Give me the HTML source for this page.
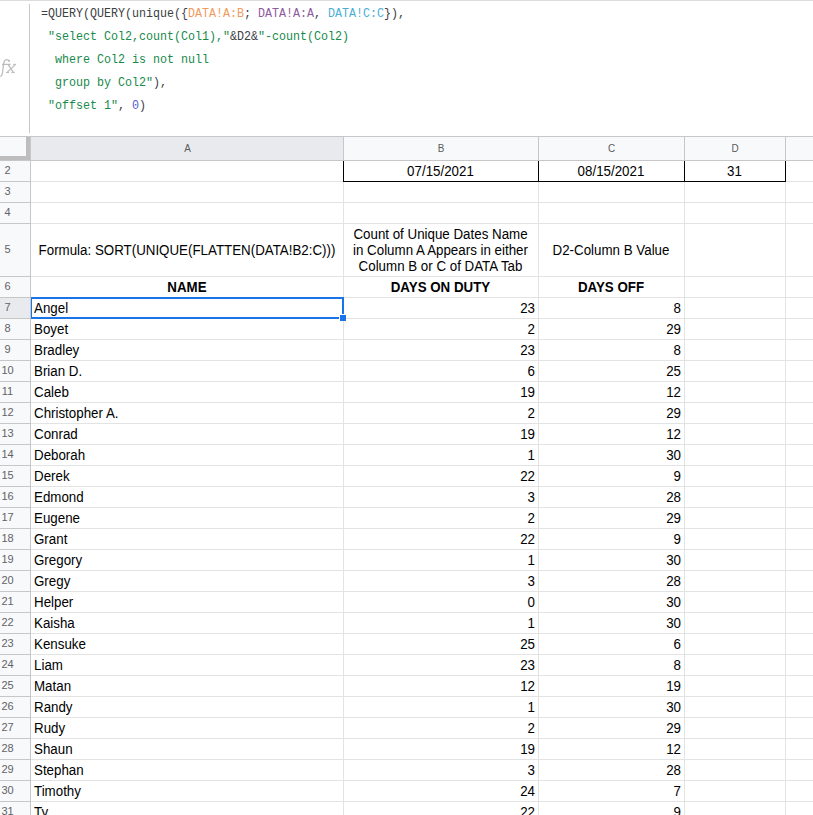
<!DOCTYPE html>
<html><head><meta charset="utf-8">
<style>
html,body{margin:0;padding:0;}
body{width:813px;height:815px;overflow:hidden;position:relative;background:#fff;font-family:"Liberation Sans",sans-serif;}
.a{position:absolute;}
.fl{position:absolute;left:41px;font-family:"Liberation Mono",monospace;font-size:13px;white-space:pre;color:#3c4043;line-height:23px;height:23px;transform-origin:0 0;transform:scaleX(0.8974);}
.s{color:#178a4c}
.r1{color:#f29a5c}
.r2{color:#8d5a9e}
.r3{color:#4aaed4}
.n{color:#5560d0}
.ch{position:absolute;top:137px;height:23px;line-height:23px;text-align:center;font-size:11px;color:#575b60;transform:scaleX(0.9);transform-origin:50% 0;}
.rh{position:absolute;left:-16px;width:47px;text-align:center;font-size:11px;color:#5f6368;}
.t{position:absolute;font-size:14px;color:#000;white-space:nowrap;line-height:16px;transform:scaleX(0.95238);transform-origin:0 0;}
</style></head><body>

<div class="a" style="left:0;top:0;width:813px;height:1px;background:#dadce0"></div>
<div class="a" style="left:29px;top:4px;width:1px;height:129px;background:#c7c7c7"></div>
<svg class="a" style="left:0;top:55px" width="20" height="25" viewBox="0 0 20 25"><g fill="none" stroke="#bdbdbd" stroke-width="1.3"><path d="M0.2,21.3 C1.8,21.2 2.4,19.5 2.7,16.5 L3.6,9 C4.1,5.6 5.2,4.6 7,4.6 C8.3,4.6 9,5.1 9.2,6"/><path d="M2,9.4 H10.5"/><path d="M8.2,9.6 L13.4,17.4"/><path d="M15.2,9.6 L7.2,17.4"/><path d="M6,17.5 H9" stroke-width="1.1"/><path d="M11.4,17.5 H14.8" stroke-width="1.1"/><path d="M13.2,9.4 H16" stroke-width="1.1"/></g><circle cx="9.1" cy="6.1" r="1" fill="#bdbdbd"/></svg>
<div class="fl" style="top:1.5px">=QUERY(QUERY(unique({<span class="r1">DATA!A:B</span>; <span class="r2">DATA!A:A</span>, <span class="r3">DATA!C:C</span>}),</div>
<div class="fl" style="top:24.5px"> <span class="s">"select Col2,count(Col1),"</span>&amp;D2&amp;<span class="s">"-count(Col2)</span></div>
<div class="fl" style="top:47.5px"><span class="s">  where Col2 is not null</span></div>
<div class="fl" style="top:70.5px"><span class="s">  group by Col2"</span>),</div>
<div class="fl" style="top:93.5px"> <span class="s">"offset 1"</span>, <span class="n">0</span>)</div>
<div class="a" style="left:0;top:136px;width:813px;height:1px;background:#c7c7c7"></div>
<div class="a" style="left:0;top:137px;width:813px;height:23px;background:#f8f9fa"></div>
<div class="a" style="left:31px;top:137px;width:312px;height:23px;background:#e8eaed"></div>
<div class="a" style="left:0;top:160px;width:813px;height:1px;background:#c7c7c7"></div>
<div class="a" style="left:0;top:161px;width:30px;height:654px;background:#f8f9fa"></div>
<div class="a" style="left:0;top:298px;width:30px;height:20px;background:#e8eaed"></div>
<div class="a" style="left:30px;top:137px;width:1px;height:678px;background:#c7c7c7"></div>
<div class="a" style="left:26px;top:137px;width:4px;height:23px;background:#bdbdbd"></div>
<div class="a" style="left:0;top:156px;width:30px;height:4px;background:#bdbdbd"></div>
<div class="a" style="left:343px;top:137px;width:1px;height:23px;background:#c7c7c7"></div>
<div class="a" style="left:538px;top:137px;width:1px;height:23px;background:#c7c7c7"></div>
<div class="a" style="left:684px;top:137px;width:1px;height:23px;background:#c7c7c7"></div>
<div class="a" style="left:785px;top:137px;width:1px;height:23px;background:#c7c7c7"></div>
<div class="a" style="left:343px;top:161px;width:1px;height:654px;background:#e2e3e3"></div>
<div class="a" style="left:538px;top:161px;width:1px;height:654px;background:#e2e3e3"></div>
<div class="a" style="left:684px;top:161px;width:1px;height:654px;background:#e2e3e3"></div>
<div class="a" style="left:785px;top:161px;width:1px;height:654px;background:#e2e3e3"></div>
<div class="a" style="left:31px;top:181px;width:782px;height:1px;background:#e2e3e3"></div>
<div class="a" style="left:0;top:181px;width:30px;height:1px;background:#c7c7c7"></div>
<div class="a" style="left:31px;top:202px;width:782px;height:1px;background:#e2e3e3"></div>
<div class="a" style="left:0;top:202px;width:30px;height:1px;background:#c7c7c7"></div>
<div class="a" style="left:31px;top:223px;width:782px;height:1px;background:#e2e3e3"></div>
<div class="a" style="left:0;top:223px;width:30px;height:1px;background:#c7c7c7"></div>
<div class="a" style="left:31px;top:276px;width:782px;height:1px;background:#e2e3e3"></div>
<div class="a" style="left:0;top:276px;width:30px;height:1px;background:#c7c7c7"></div>
<div class="a" style="left:31px;top:297px;width:782px;height:1px;background:#e2e3e3"></div>
<div class="a" style="left:0;top:297px;width:30px;height:1px;background:#c7c7c7"></div>
<div class="a" style="left:31px;top:318px;width:782px;height:1px;background:#e2e3e3"></div>
<div class="a" style="left:0;top:318px;width:30px;height:1px;background:#c7c7c7"></div>
<div class="a" style="left:31px;top:339px;width:782px;height:1px;background:#e2e3e3"></div>
<div class="a" style="left:0;top:339px;width:30px;height:1px;background:#c7c7c7"></div>
<div class="a" style="left:31px;top:360px;width:782px;height:1px;background:#e2e3e3"></div>
<div class="a" style="left:0;top:360px;width:30px;height:1px;background:#c7c7c7"></div>
<div class="a" style="left:31px;top:381px;width:782px;height:1px;background:#e2e3e3"></div>
<div class="a" style="left:0;top:381px;width:30px;height:1px;background:#c7c7c7"></div>
<div class="a" style="left:31px;top:402px;width:782px;height:1px;background:#e2e3e3"></div>
<div class="a" style="left:0;top:402px;width:30px;height:1px;background:#c7c7c7"></div>
<div class="a" style="left:31px;top:423px;width:782px;height:1px;background:#e2e3e3"></div>
<div class="a" style="left:0;top:423px;width:30px;height:1px;background:#c7c7c7"></div>
<div class="a" style="left:31px;top:444px;width:782px;height:1px;background:#e2e3e3"></div>
<div class="a" style="left:0;top:444px;width:30px;height:1px;background:#c7c7c7"></div>
<div class="a" style="left:31px;top:465px;width:782px;height:1px;background:#e2e3e3"></div>
<div class="a" style="left:0;top:465px;width:30px;height:1px;background:#c7c7c7"></div>
<div class="a" style="left:31px;top:486px;width:782px;height:1px;background:#e2e3e3"></div>
<div class="a" style="left:0;top:486px;width:30px;height:1px;background:#c7c7c7"></div>
<div class="a" style="left:31px;top:507px;width:782px;height:1px;background:#e2e3e3"></div>
<div class="a" style="left:0;top:507px;width:30px;height:1px;background:#c7c7c7"></div>
<div class="a" style="left:31px;top:528px;width:782px;height:1px;background:#e2e3e3"></div>
<div class="a" style="left:0;top:528px;width:30px;height:1px;background:#c7c7c7"></div>
<div class="a" style="left:31px;top:549px;width:782px;height:1px;background:#e2e3e3"></div>
<div class="a" style="left:0;top:549px;width:30px;height:1px;background:#c7c7c7"></div>
<div class="a" style="left:31px;top:570px;width:782px;height:1px;background:#e2e3e3"></div>
<div class="a" style="left:0;top:570px;width:30px;height:1px;background:#c7c7c7"></div>
<div class="a" style="left:31px;top:591px;width:782px;height:1px;background:#e2e3e3"></div>
<div class="a" style="left:0;top:591px;width:30px;height:1px;background:#c7c7c7"></div>
<div class="a" style="left:31px;top:612px;width:782px;height:1px;background:#e2e3e3"></div>
<div class="a" style="left:0;top:612px;width:30px;height:1px;background:#c7c7c7"></div>
<div class="a" style="left:31px;top:633px;width:782px;height:1px;background:#e2e3e3"></div>
<div class="a" style="left:0;top:633px;width:30px;height:1px;background:#c7c7c7"></div>
<div class="a" style="left:31px;top:654px;width:782px;height:1px;background:#e2e3e3"></div>
<div class="a" style="left:0;top:654px;width:30px;height:1px;background:#c7c7c7"></div>
<div class="a" style="left:31px;top:675px;width:782px;height:1px;background:#e2e3e3"></div>
<div class="a" style="left:0;top:675px;width:30px;height:1px;background:#c7c7c7"></div>
<div class="a" style="left:31px;top:696px;width:782px;height:1px;background:#e2e3e3"></div>
<div class="a" style="left:0;top:696px;width:30px;height:1px;background:#c7c7c7"></div>
<div class="a" style="left:31px;top:717px;width:782px;height:1px;background:#e2e3e3"></div>
<div class="a" style="left:0;top:717px;width:30px;height:1px;background:#c7c7c7"></div>
<div class="a" style="left:31px;top:738px;width:782px;height:1px;background:#e2e3e3"></div>
<div class="a" style="left:0;top:738px;width:30px;height:1px;background:#c7c7c7"></div>
<div class="a" style="left:31px;top:759px;width:782px;height:1px;background:#e2e3e3"></div>
<div class="a" style="left:0;top:759px;width:30px;height:1px;background:#c7c7c7"></div>
<div class="a" style="left:31px;top:780px;width:782px;height:1px;background:#e2e3e3"></div>
<div class="a" style="left:0;top:780px;width:30px;height:1px;background:#c7c7c7"></div>
<div class="a" style="left:31px;top:801px;width:782px;height:1px;background:#e2e3e3"></div>
<div class="a" style="left:0;top:801px;width:30px;height:1px;background:#c7c7c7"></div>
<div class="a" style="left:31px;top:822px;width:782px;height:1px;background:#e2e3e3"></div>
<div class="a" style="left:0;top:822px;width:30px;height:1px;background:#c7c7c7"></div>
<div class="ch" style="left:31px;width:313px">A</div>
<div class="ch" style="left:343px;width:196px">B</div>
<div class="ch" style="left:538px;width:147px">C</div>
<div class="ch" style="left:684px;width:102px">D</div>
<div class="rh" style="top:160px;height:20px;line-height:20px">2</div>
<div class="rh" style="top:181px;height:20px;line-height:20px">3</div>
<div class="rh" style="top:202px;height:20px;line-height:20px">4</div>
<div class="rh" style="top:223px;height:52px;line-height:52px">5</div>
<div class="rh" style="top:276px;height:20px;line-height:20px">6</div>
<div class="rh" style="top:297px;height:20px;line-height:20px">7</div>
<div class="rh" style="top:318px;height:20px;line-height:20px">8</div>
<div class="rh" style="top:339px;height:20px;line-height:20px">9</div>
<div class="rh" style="top:360px;height:20px;line-height:20px">10</div>
<div class="rh" style="top:381px;height:20px;line-height:20px">11</div>
<div class="rh" style="top:402px;height:20px;line-height:20px">12</div>
<div class="rh" style="top:423px;height:20px;line-height:20px">13</div>
<div class="rh" style="top:444px;height:20px;line-height:20px">14</div>
<div class="rh" style="top:465px;height:20px;line-height:20px">15</div>
<div class="rh" style="top:486px;height:20px;line-height:20px">16</div>
<div class="rh" style="top:507px;height:20px;line-height:20px">17</div>
<div class="rh" style="top:528px;height:20px;line-height:20px">18</div>
<div class="rh" style="top:549px;height:20px;line-height:20px">19</div>
<div class="rh" style="top:570px;height:20px;line-height:20px">20</div>
<div class="rh" style="top:591px;height:20px;line-height:20px">21</div>
<div class="rh" style="top:612px;height:20px;line-height:20px">22</div>
<div class="rh" style="top:633px;height:20px;line-height:20px">23</div>
<div class="rh" style="top:654px;height:20px;line-height:20px">24</div>
<div class="rh" style="top:675px;height:20px;line-height:20px">25</div>
<div class="rh" style="top:696px;height:20px;line-height:20px">26</div>
<div class="rh" style="top:717px;height:20px;line-height:20px">27</div>
<div class="rh" style="top:738px;height:20px;line-height:20px">28</div>
<div class="rh" style="top:759px;height:20px;line-height:20px">29</div>
<div class="rh" style="top:780px;height:20px;line-height:20px">30</div>
<div class="rh" style="top:801px;height:20px;line-height:20px">31</div>
<div class="a" style="left:343px;top:181px;width:443px;height:1px;background:#000"></div>
<div class="a" style="left:343px;top:161px;width:1px;height:21px;background:#000"></div>
<div class="a" style="left:538px;top:161px;width:1px;height:21px;background:#000"></div>
<div class="a" style="left:684px;top:161px;width:1px;height:21px;background:#000"></div>
<div class="a" style="left:785px;top:161px;width:1px;height:21px;background:#000"></div>
<div class="t" style="top:163px;left:343px;width:195px;text-align:center;transform-origin:50% 0;">07/15/2021</div>
<div class="t" style="top:163px;left:538px;width:146px;text-align:center;transform-origin:50% 0;">08/15/2021</div>
<div class="t" style="top:163px;left:684px;width:101px;text-align:center;transform-origin:50% 0;">31</div>
<div class="t" style="top:242px;left:31px;width:312px;text-align:center;transform-origin:50% 0;">Formula: SORT(UNIQUE(FLATTEN(DATA!B2:C)))</div>
<div class="t" style="top:226px;left:343px;width:195px;text-align:center;transform-origin:50% 0;">Count of Unique Dates Name</div>
<div class="t" style="top:242px;left:343px;width:195px;text-align:center;transform-origin:50% 0;">in Column A Appears in either</div>
<div class="t" style="top:258px;left:343px;width:195px;text-align:center;transform-origin:50% 0;">Column B or C of DATA Tab</div>
<div class="t" style="top:242px;left:538px;width:146px;text-align:center;transform-origin:50% 0;">D2-Column B Value</div>
<div class="t" style="top:279px;left:31px;width:312px;text-align:center;transform-origin:50% 0;font-weight:bold;">NAME</div>
<div class="t" style="top:279px;left:343px;width:195px;text-align:center;transform-origin:50% 0;font-weight:bold;">DAYS ON DUTY</div>
<div class="t" style="top:279px;left:538px;width:146px;text-align:center;transform-origin:50% 0;font-weight:bold;">DAYS OFF</div>
<div class="t" style="top:300px;left:34px;">Angel</div>
<div class="t" style="top:300px;left:343px;width:192px;text-align:right;transform-origin:100% 0;">23</div>
<div class="t" style="top:300px;left:538px;width:143px;text-align:right;transform-origin:100% 0;">8</div>
<div class="t" style="top:321px;left:34px;">Boyet</div>
<div class="t" style="top:321px;left:343px;width:192px;text-align:right;transform-origin:100% 0;">2</div>
<div class="t" style="top:321px;left:538px;width:143px;text-align:right;transform-origin:100% 0;">29</div>
<div class="t" style="top:342px;left:34px;">Bradley</div>
<div class="t" style="top:342px;left:343px;width:192px;text-align:right;transform-origin:100% 0;">23</div>
<div class="t" style="top:342px;left:538px;width:143px;text-align:right;transform-origin:100% 0;">8</div>
<div class="t" style="top:363px;left:34px;">Brian D.</div>
<div class="t" style="top:363px;left:343px;width:192px;text-align:right;transform-origin:100% 0;">6</div>
<div class="t" style="top:363px;left:538px;width:143px;text-align:right;transform-origin:100% 0;">25</div>
<div class="t" style="top:384px;left:34px;">Caleb</div>
<div class="t" style="top:384px;left:343px;width:192px;text-align:right;transform-origin:100% 0;">19</div>
<div class="t" style="top:384px;left:538px;width:143px;text-align:right;transform-origin:100% 0;">12</div>
<div class="t" style="top:405px;left:34px;">Christopher A.</div>
<div class="t" style="top:405px;left:343px;width:192px;text-align:right;transform-origin:100% 0;">2</div>
<div class="t" style="top:405px;left:538px;width:143px;text-align:right;transform-origin:100% 0;">29</div>
<div class="t" style="top:426px;left:34px;">Conrad</div>
<div class="t" style="top:426px;left:343px;width:192px;text-align:right;transform-origin:100% 0;">19</div>
<div class="t" style="top:426px;left:538px;width:143px;text-align:right;transform-origin:100% 0;">12</div>
<div class="t" style="top:447px;left:34px;">Deborah</div>
<div class="t" style="top:447px;left:343px;width:192px;text-align:right;transform-origin:100% 0;">1</div>
<div class="t" style="top:447px;left:538px;width:143px;text-align:right;transform-origin:100% 0;">30</div>
<div class="t" style="top:468px;left:34px;">Derek</div>
<div class="t" style="top:468px;left:343px;width:192px;text-align:right;transform-origin:100% 0;">22</div>
<div class="t" style="top:468px;left:538px;width:143px;text-align:right;transform-origin:100% 0;">9</div>
<div class="t" style="top:489px;left:34px;">Edmond</div>
<div class="t" style="top:489px;left:343px;width:192px;text-align:right;transform-origin:100% 0;">3</div>
<div class="t" style="top:489px;left:538px;width:143px;text-align:right;transform-origin:100% 0;">28</div>
<div class="t" style="top:510px;left:34px;">Eugene</div>
<div class="t" style="top:510px;left:343px;width:192px;text-align:right;transform-origin:100% 0;">2</div>
<div class="t" style="top:510px;left:538px;width:143px;text-align:right;transform-origin:100% 0;">29</div>
<div class="t" style="top:531px;left:34px;">Grant</div>
<div class="t" style="top:531px;left:343px;width:192px;text-align:right;transform-origin:100% 0;">22</div>
<div class="t" style="top:531px;left:538px;width:143px;text-align:right;transform-origin:100% 0;">9</div>
<div class="t" style="top:552px;left:34px;">Gregory</div>
<div class="t" style="top:552px;left:343px;width:192px;text-align:right;transform-origin:100% 0;">1</div>
<div class="t" style="top:552px;left:538px;width:143px;text-align:right;transform-origin:100% 0;">30</div>
<div class="t" style="top:573px;left:34px;">Gregy</div>
<div class="t" style="top:573px;left:343px;width:192px;text-align:right;transform-origin:100% 0;">3</div>
<div class="t" style="top:573px;left:538px;width:143px;text-align:right;transform-origin:100% 0;">28</div>
<div class="t" style="top:594px;left:34px;">Helper</div>
<div class="t" style="top:594px;left:343px;width:192px;text-align:right;transform-origin:100% 0;">0</div>
<div class="t" style="top:594px;left:538px;width:143px;text-align:right;transform-origin:100% 0;">30</div>
<div class="t" style="top:615px;left:34px;">Kaisha</div>
<div class="t" style="top:615px;left:343px;width:192px;text-align:right;transform-origin:100% 0;">1</div>
<div class="t" style="top:615px;left:538px;width:143px;text-align:right;transform-origin:100% 0;">30</div>
<div class="t" style="top:636px;left:34px;">Kensuke</div>
<div class="t" style="top:636px;left:343px;width:192px;text-align:right;transform-origin:100% 0;">25</div>
<div class="t" style="top:636px;left:538px;width:143px;text-align:right;transform-origin:100% 0;">6</div>
<div class="t" style="top:657px;left:34px;">Liam</div>
<div class="t" style="top:657px;left:343px;width:192px;text-align:right;transform-origin:100% 0;">23</div>
<div class="t" style="top:657px;left:538px;width:143px;text-align:right;transform-origin:100% 0;">8</div>
<div class="t" style="top:678px;left:34px;">Matan</div>
<div class="t" style="top:678px;left:343px;width:192px;text-align:right;transform-origin:100% 0;">12</div>
<div class="t" style="top:678px;left:538px;width:143px;text-align:right;transform-origin:100% 0;">19</div>
<div class="t" style="top:699px;left:34px;">Randy</div>
<div class="t" style="top:699px;left:343px;width:192px;text-align:right;transform-origin:100% 0;">1</div>
<div class="t" style="top:699px;left:538px;width:143px;text-align:right;transform-origin:100% 0;">30</div>
<div class="t" style="top:720px;left:34px;">Rudy</div>
<div class="t" style="top:720px;left:343px;width:192px;text-align:right;transform-origin:100% 0;">2</div>
<div class="t" style="top:720px;left:538px;width:143px;text-align:right;transform-origin:100% 0;">29</div>
<div class="t" style="top:741px;left:34px;">Shaun</div>
<div class="t" style="top:741px;left:343px;width:192px;text-align:right;transform-origin:100% 0;">19</div>
<div class="t" style="top:741px;left:538px;width:143px;text-align:right;transform-origin:100% 0;">12</div>
<div class="t" style="top:762px;left:34px;">Stephan</div>
<div class="t" style="top:762px;left:343px;width:192px;text-align:right;transform-origin:100% 0;">3</div>
<div class="t" style="top:762px;left:538px;width:143px;text-align:right;transform-origin:100% 0;">28</div>
<div class="t" style="top:783px;left:34px;">Timothy</div>
<div class="t" style="top:783px;left:343px;width:192px;text-align:right;transform-origin:100% 0;">24</div>
<div class="t" style="top:783px;left:538px;width:143px;text-align:right;transform-origin:100% 0;">7</div>
<div class="t" style="top:804px;left:34px;">Ty</div>
<div class="t" style="top:804px;left:343px;width:192px;text-align:right;transform-origin:100% 0;">22</div>
<div class="t" style="top:804px;left:538px;width:143px;text-align:right;transform-origin:100% 0;">9</div>
<div class="a" style="left:30px;top:297px;width:314px;height:22px;box-sizing:border-box;border:2px solid #1a73e8;"></div>
<div class="a" style="left:339px;top:314px;width:7px;height:7px;background:#fff"></div>
<div class="a" style="left:340px;top:315px;width:6px;height:6px;background:#1a73e8"></div>
<div class="a" style="left:30px;top:297px;width:1px;height:22px;background:#c7c7c7"></div>
</body></html>
